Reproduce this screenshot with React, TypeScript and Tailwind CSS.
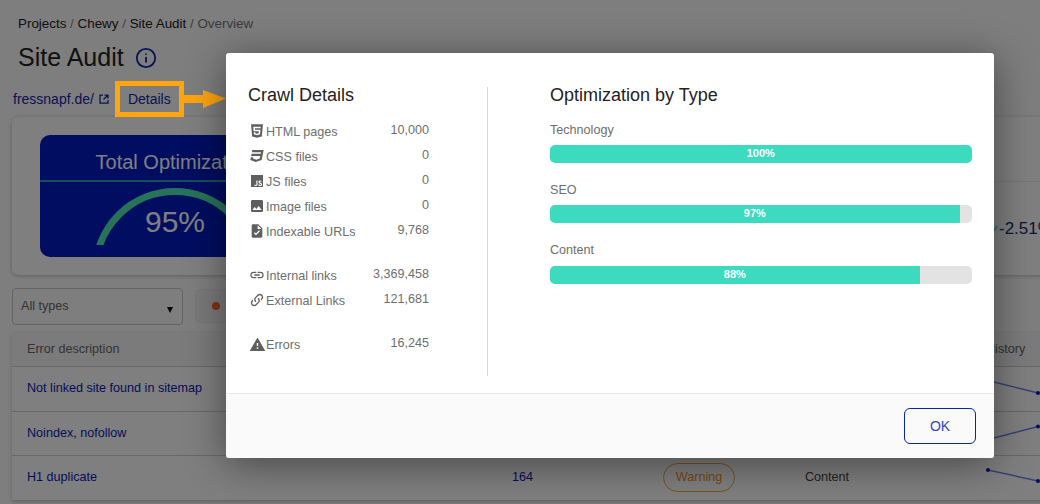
import React from "react";

const P: Record<string, string> = {
  html: "M12,17.56L16.07,16.43L16.62,10.33H9.38L9.2,8.3H16.8L17,6.31H7L7.56,12.32H14.45L14.22,14.9L12,15.5L9.78,14.9L9.64,13.5H7.64L7.93,16.43L12,17.56M4.07,3H19.93L18.5,19.2L12,21L5.5,19.2L4.07,3Z",
  css: "M5,3L4.35,6.34H17.94L17.5,8.5H3.92L3.26,11.83H16.85L16.09,15.64L10.61,17.45L5.86,15.64L6.19,14H2.85L2.06,18L9.91,21L18.96,18L20.16,11.97L20.4,10.76L21.94,3H5Z",
  js: "M3,3H21V21H3V3M7.73,18.04C8.13,18.89 8.92,19.59 10.27,19.59C11.77,19.59 12.8,18.79 12.8,17.04V11.26H11.1V17C11.1,17.86 10.75,18.08 10.2,18.08C9.62,18.08 9.38,17.68 9.05,17.11L7.73,18.04M13.71,17.86C14.21,18.84 15.22,19.59 16.8,19.59C18.4,19.59 19.6,18.76 19.6,17.23C19.6,15.82 18.79,15.19 17.35,14.57L16.93,14.39C16.2,14.08 15.89,13.87 15.89,13.37C15.89,12.96 16.2,12.64 16.7,12.64C17.18,12.64 17.5,12.85 17.79,13.37L19.1,12.5C18.55,11.54 17.77,11.17 16.7,11.17C15.19,11.17 14.22,12.13 14.22,13.4C14.22,14.78 15.03,15.43 16.25,15.95L16.67,16.13C17.45,16.47 17.91,16.68 17.91,17.26C17.91,17.74 17.46,18.09 16.76,18.09C15.93,18.09 15.45,17.66 15.09,17.06L13.71,17.86Z",
  image: "M8.5,13.5L11,16.5L14.5,12L19,18H5M21,19V5C21,3.89 20.1,3 19,3H5A2,2 0 0,0 3,5V19A2,2 0 0,0 5,21H19A2,2 0 0,0 21,19Z",
  file: "M14,2H6A2,2 0 0,0 4,4V20A2,2 0 0,0 6,22H18A2,2 0 0,0 20,20V8L14,2M10.45,18.46L7.28,15.29L8.69,13.88L10.45,15.64L15.05,11.04L16.46,12.45L10.45,18.46M13,9V3.5L18.5,9H13Z",
  link: "M3.9,12C3.9,10.29 5.29,8.9 7,8.9H11V7H7A5,5 0 0,0 2,12A5,5 0 0,0 7,17H11V15.1H7C5.29,15.1 3.9,13.71 3.9,12M8,13H16V11H8V13M17,7H13V8.9H17C18.71,8.9 20.1,10.29 20.1,12C20.1,13.71 18.71,15.1 17,15.1H13V17H17A5,5 0 0,0 22,12A5,5 0 0,0 17,7Z",
  variant: "M10.59,13.41C11,13.8 11,14.44 10.59,14.83C10.2,15.22 9.56,15.22 9.17,14.83C7.22,12.88 7.22,9.71 9.17,7.76V7.76L12.71,4.22C14.66,2.27 17.83,2.27 19.78,4.22C21.73,6.17 21.73,9.34 19.78,11.29L18.29,12.78C18.3,11.96 18.17,11.14 17.89,10.36L18.36,9.88C19.54,8.71 19.54,6.81 18.36,5.64C17.19,4.46 15.29,4.46 14.12,5.64L10.59,9.17C9.41,10.34 9.41,12.24 10.59,13.41M13.41,9.17C13.8,8.78 14.44,8.78 14.83,9.17C16.78,11.12 16.78,14.29 14.83,16.24V16.24L11.29,19.78C9.34,21.73 6.17,21.73 4.22,19.78C2.27,17.83 2.27,14.66 4.22,12.71L5.71,11.22C5.7,12.04 5.83,12.86 6.11,13.65L5.64,14.12C4.46,15.29 4.46,17.19 5.64,18.36C6.81,19.54 8.71,19.54 9.88,18.36L13.41,14.83C14.59,13.66 14.59,11.76 13.41,10.59C13,10.2 13,9.56 13.41,9.17Z",
  alert: "M13,14H11V10H13M13,18H11V16H13M1,21H23L12,2L1,21Z",
};

function Ico({ d, size = 16 }: { d: string; size?: number }) {
  return (
    <svg width={size} height={size} viewBox="0 0 24 24" className="shrink-0 fill-[#5f5f5f]">
      <path d={P[d]} />
    </svg>
  );
}

function Stat({ icon, label, value, size = 16 }: { icon: string; label: string; value: string; size?: number }) {
  return (
    <div className="flex h-[25px] w-[181px] items-center justify-between text-[12.6px] text-[#6e6e6e]">
      <div className="flex items-center">
        <div className="flex w-[18px] justify-center">
          <Ico d={icon} size={size} />
        </div>
        <span className="mt-px">{label}</span>
      </div>
      <span className="mb-[3px]">{value}</span>
    </div>
  );
}

function Bar({ label, pct, fill, gap }: { label: string; pct: string; fill: string; gap: string }) {
  return (
    <div className="h-[60px]">
      <div className={`text-[12.6px] leading-[18px] text-[#6e6e6e] ${gap}`}>{label}</div>
      <div className="h-[18px] w-[421.5px] overflow-hidden rounded-[5px] bg-[#e3e3e3]">
        <div className={`flex h-full items-center justify-center bg-[#3cdbc0] pb-px text-[11px] font-bold text-white ${fill}`}>
          {pct}
        </div>
      </div>
    </div>
  );
}

function Row({ name, count, badge, type, line }: { name: string; count?: string; badge?: boolean; type?: string; line: React.ReactNode }) {
  return (
    <div className="flex h-[44.5px] items-center border-b border-[#d0d0d0] text-[12.6px]">
      <div className="w-[500px] pl-[15px] text-[#0a1ab0]">{name}</div>
      <div className="w-[151px] text-[#0a1ab0]">{count}</div>
      <div className="w-[142px]">
        {badge && (
          <span className="inline-flex h-[29px] w-[72px] items-center justify-center rounded-full border border-[#f2a33a] pb-px text-[#e88f2a]">
            Warning
          </span>
        )}
      </div>
      <div className="w-[170px] text-[#444]">{type}</div>
      <div className="relative h-full flex-1">{line}</div>
    </div>
  );
}

function Spark({ x1, y1, x2, y2, dot1 }: { x1: number; y1: number; x2: number; y2: number; dot1?: boolean }) {
  return (
    <svg width="70" height="44" className="absolute left-0 top-0 overflow-visible">
      <line x1={x1} y1={y1} x2={x2} y2={y2} stroke="#6c86ea" strokeWidth="1.5" />
      {dot1 && <circle cx={x1} cy={y1} r="2" fill="#0a1ab0" />}
      <circle cx={x2} cy={y2} r="2" fill="#0a1ab0" />
    </svg>
  );
}

export default function App() {
  return (
    <div className="relative h-[504px] w-[1040px] overflow-hidden bg-[#fdfdfd] [font-family:'Liberation_Sans',Arial,sans-serif]">
      {/* Underlying page */}
      <div className="w-[1100px] pl-[12px]">
        <div className="h-[44px] pl-[6px] pt-[16px] text-[13.4px] leading-[16px] text-[#222]">
          Projects <span className="text-[#888]">/</span> Chewy <span className="text-[#888]">/</span> Site Audit{" "}
          <span className="text-[#777]">/ Overview</span>
        </div>
        <div className="flex h-[27px] items-center pl-[6px] text-[25px] text-[#222]">
          Site Audit
          <svg width="22" height="22" viewBox="0 0 24 24" className="ml-[11px] fill-none stroke-[#1426a8] stroke-2">
            <circle cx="12" cy="12" r="10" />
            <path d="M12 11v6M12 7v1.5" />
          </svg>
        </div>
        <div className="flex h-[46px] items-center pt-[10px] text-[14px] text-[#1426a8]">
          <span className="ml-px">fressnapf.de/</span>
          <svg width="12" height="12" viewBox="0 0 24 24" className="ml-[4px] fill-none stroke-[#1426a8] stroke-[2.5]">
            <path d="M10 4H4v16h16v-6M13 4h7v7M20 4l-9 9" />
          </svg>
          <span className="ml-[18px]">Details</span>
        </div>
        <div className="flex h-[158px] rounded-[6px] bg-white pl-[28px] pt-[18px] shadow-[0_1px_4px_rgba(0,0,0,0.25)]">
          <div className="h-[122px] w-[270px] rounded-[10px] bg-[#001ac0]">
            <div className="flex h-[47px] items-center justify-center border-b-2 border-[#2b9cb4] pt-[9px] text-[20px] text-white">
              Total Optimization
            </div>
            <div className="relative flex justify-center pt-[4px]">
              <svg width="170" height="59" viewBox="0 0 170 59">
                <circle cx="85" cy="84.8" r="79.3" fill="none" stroke="#4fe6b4" strokeWidth="7" />
              </svg>
              <div className="absolute inset-x-0 top-[17px] text-center text-[30px] text-white">95%</div>
            </div>
          </div>
          <div className="ml-[684px] w-[100px]">
            <div className="h-[47px] border-b border-[#eeeeee]" />
            <div className="mt-[34px] flex items-center text-[17px] text-[#1a2a70]">
              <svg width="5" height="8" viewBox="0 0 5 8" className="shrink-0">
                <path d="M0 6L3 1" stroke="#4fe6b4" strokeWidth="1.5" fill="none" />
              </svg>
              <span>-2.51%</span>
            </div>
          </div>
        </div>
        <div className="flex h-[58px] items-center gap-[13px] pt-[4px]">
          <div className="relative flex h-[37px] w-[171px] items-center rounded-[4px] border border-[#c9c9c9] pl-[8px] text-[12.6px] text-[#666]">
            <span>All types</span>
            <span className="absolute right-[9px] top-[18px] h-0 w-0 border-x-[3px] border-t-[6px] border-x-transparent border-t-black" />
          </div>
          <div className="flex h-[32px] w-[120px] items-center rounded-[4px] bg-[#f4f4f4] pl-[16px] shadow-[0_0_2px_rgba(0,0,0,0.2)]">
            <span className="h-[8px] w-[8px] rounded-full bg-[#ff6a2a]" />
          </div>
        </div>
        <div className="rounded-t-[4px] bg-white shadow-[0_1px_4px_rgba(0,0,0,0.2)]">
          <div className="flex h-[34px] items-center border-b border-[#d0d0d0] bg-[#f7f7f7] pl-[15px] text-[12.6px] text-[#666]">
            <span className="w-[959px]">Error description</span>
            <span>History</span>
          </div>
          <Row name="Not linked site found in sitemap" line={<Spark x1={19} y1={15} x2={63} y2={26} />} />
          <Row name="Noindex, nofollow" line={<Spark x1={19} y1={26} x2={63} y2={14.5} />} />
          <Row name="H1 duplicate" count="164" badge type="Content" line={<Spark x1={13} y1={14} x2={63} y2={25} dot1 />} />
        </div>
      </div>

      {/* Backdrop */}
      <div className="absolute inset-0 bg-black/50" />

      {/* Annotation above the backdrop */}
      <div className="absolute left-[115px] top-[81px] h-[36px] w-[69px] border-[5px] border-[#ffa510]" />
      <svg width="43" height="20" viewBox="0 0 43 20" className="absolute left-[183px] top-[89px]">
        <path d="M0 6H20V1L43 9.5L20 19V14H0Z" fill="#ffa510" />
      </svg>

      {/* Modal */}
      <div className="absolute left-[226px] top-[53px] flex h-[405px] w-[768px] flex-col rounded-[3px] bg-white shadow-[0_6px_40px_rgba(0,0,0,0.45)]">
        <div className="flex h-[341px] border-b border-[#e8e8e8]">
          <div className="w-[261px] pl-[22px] pt-[32px]">
            <h2 className="mb-[14px] h-[20px] text-[18px] leading-[20px] text-[#222]">Crawl Details</h2>
            <Stat icon="html" label="HTML pages" value="10,000" size={18} />
            <Stat icon="css" label="CSS files" value="0" size={16} />
            <Stat icon="js" label="JS files" value="0" size={16} />
            <Stat icon="image" label="Image files" value="0" size={16} />
            <Stat icon="file" label="Indexable URLs" value="9,768" size={16} />
            <div className="h-[19px]" />
            <Stat icon="link" label="Internal links" value="3,369,458" size={16} />
            <Stat icon="variant" label="External Links" value="121,681" size={16} />
            <div className="h-[19px]" />
            <Stat icon="alert" label="Errors" value="16,245" size={17} />
          </div>
          <div className="mt-[34px] h-[289px] w-px bg-[#d8d8d8]" />
          <div className="pl-[62px] pt-[32px]">
            <h2 className="mb-[16px] h-[20px] text-[18px] leading-[20px] text-[#222]">Optimization by Type</h2>
            <Bar label="Technology" pct="100%" fill="w-full" gap="h-[24px]" />
            <Bar label="SEO" pct="97%" fill="w-[97.2%]" gap="h-[24px]" />
            <Bar label="Content" pct="88%" fill="w-[87.7%]" gap="h-[25px]" />
          </div>
        </div>
        <div className="flex flex-1 items-center justify-end rounded-b-[3px] bg-[#fafafa] pr-[18px]">
          <button className="h-[36px] w-[72px] rounded-[6px] border border-[#0a23a8] text-[14px] text-[#3047c8]">OK</button>
        </div>
      </div>
    </div>
  );
}
